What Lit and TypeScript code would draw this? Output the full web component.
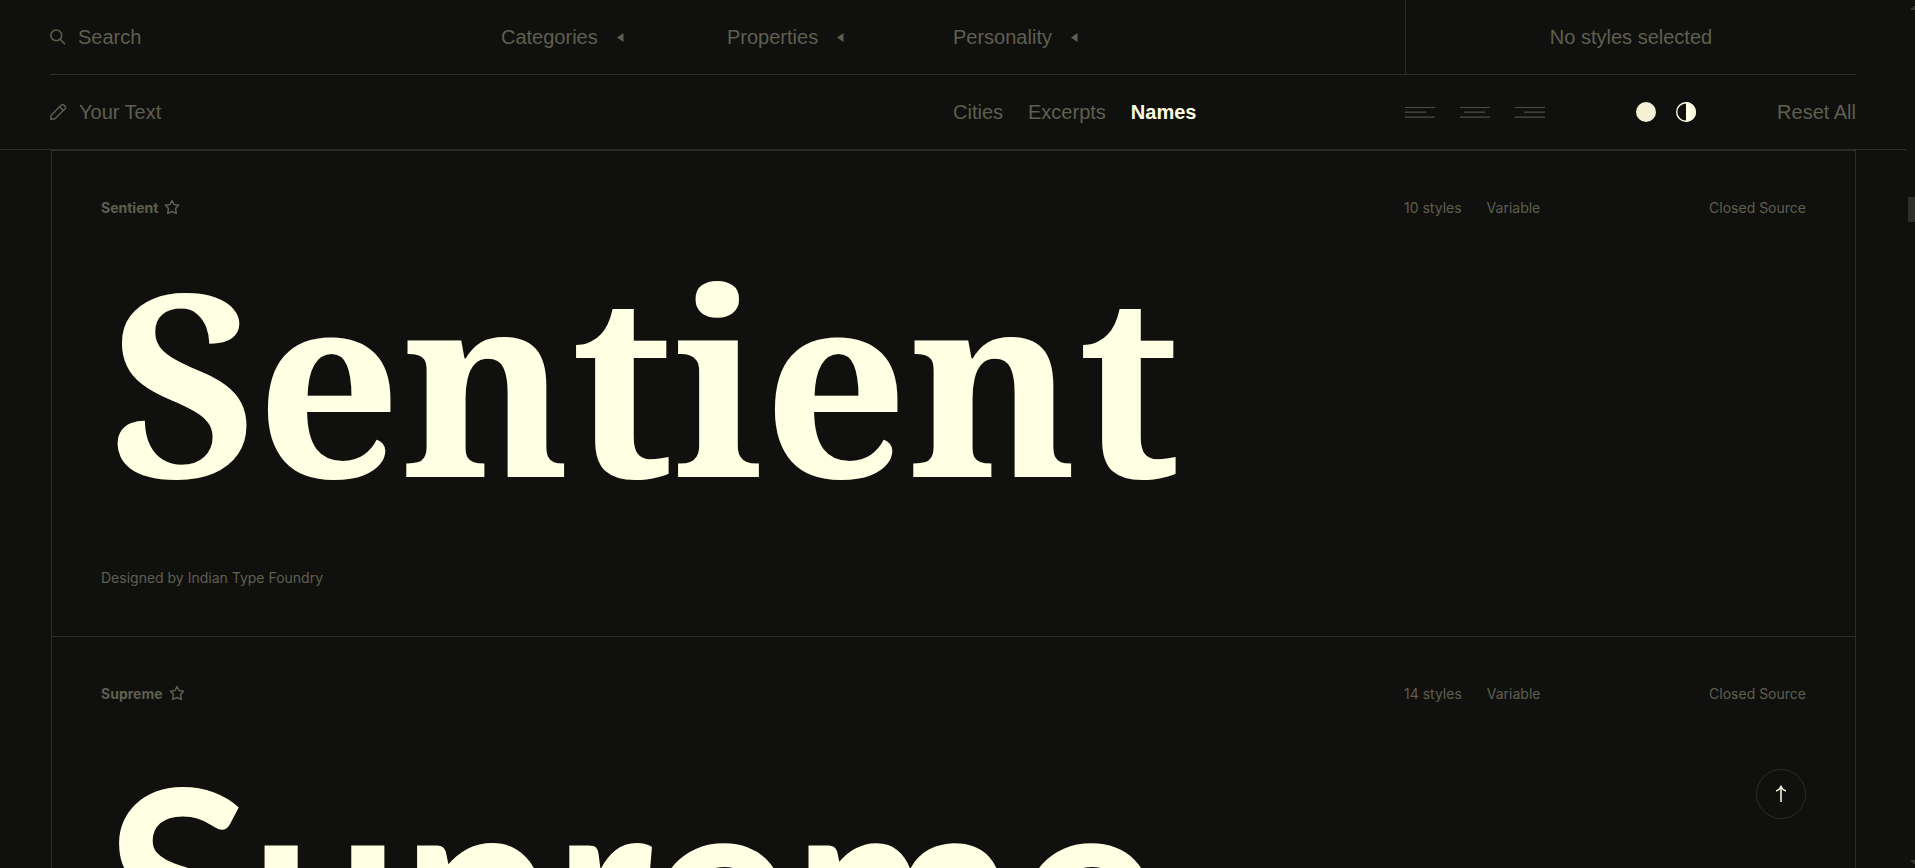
import { LitElement, html, css, svg } from "lit";
import { customElement, property, state } from "lit/decorators.js";
import { classMap } from "lit/directives/class-map.js";

interface Family {
  name: string;
  styles: number;
  designer: string;
  face: string;
}

const FAMILIES: Family[] = [
  { name: "Sentient", styles: 10, designer: "Indian Type Foundry", face: "serif" },
  { name: "Supreme", styles: 14, designer: "Jérémie Hornus, Ilya Naumoff", face: "sans" },
];

const FILTERS = ["Categories", "Properties", "Personality"];
const SAMPLES = ["Cities", "Excerpts", "Names"];

const ALIGNMENTS = [
  { name: "left", x: 0 },
  { name: "center", x: 4 },
  { name: "right", x: 9 },
];

@customElement("font-card")
export class FontCard extends LitElement {
  @property({ attribute: false }) family!: Family;

  static styles = css`
    :host {
      display: block;
      border-bottom: 1px solid #2c2d28;
      padding: 42px 49px 38px;
    }
    .meta {
      display: grid;
      grid-template-columns: minmax(0, 1303fr) minmax(0, 402fr);
      align-items: center;
      height: 28px;
    }
    .title,
    .facts {
      display: flex;
      align-items: center;
    }
    .title {
      gap: 6px;
    }
    h2 {
      margin: 0;
      font-size: 14px;
      font-weight: 700;
    }
    .star {
      display: flex;
      padding: 0;
      border: 0;
      background: none;
      color: inherit;
    }
    .facts {
      gap: 25px;
    }
    .license {
      margin-left: auto;
    }
    .specimen {
      color: #ffffe3;
      height: 300px;
      margin: 8px 0 29px;
      white-space: nowrap;
    }
    .serif {
      padding-left: 8px;
      font-family: "Noto Serif", "Liberation Serif", serif;
      font-weight: 700;
      font-size: 254px;
      line-height: 298px;
    }
    .sans {
      padding-left: 4px;
      font-family: Lato, "Liberation Sans", sans-serif;
      font-weight: 700;
      font-size: 268px;
      line-height: 328px;
    }
    .designer {
      margin: 0;
      line-height: 40px;
    }
  `;

  render() {
    const f = this.family;
    return html`
      <div class="meta">
        <div class="title">
          <h2>${f.name}</h2>
          <button class="star" aria-label="Add ${f.name} to favourites">
            <svg width="16" height="16" viewBox="0 0 16 16" fill="none" stroke="currentColor" stroke-width="1.5" stroke-linejoin="round">
              <path d="M8 1.5 10 5.5 14.6 6.2 11.5 9.4 12.3 14.4 8 12.5 3.7 14.4 4.5 9.4 1.4 6.2 6 5.5Z" />
            </svg>
          </button>
        </div>
        <div class="facts">
          <span>${f.styles} styles</span>
          <span>Variable</span>
          <span class="license">Closed Source</span>
        </div>
      </div>
      <div class="specimen ${f.face}">${f.name}</div>
      <p class="designer">Designed by ${f.designer}</p>
    `;
  }
}

@customElement("app-root")
export class AppRoot extends LitElement {
  @state() private sample = "Names";

  static styles = css`
    :host {
      display: block;
      box-sizing: border-box;
      height: 100vh;
      overflow: hidden;
      background: #10110e;
      color: #5f5f50;
      font-family: Inter, "Liberation Sans", sans-serif;
      font-size: 14px;
    }
    .page {
      display: grid;
      grid-template-columns: minmax(0, 1fr) 9px;
      height: 100%;
    }
    .content {
      overflow: hidden;
    }
    .bar {
      border-bottom: 1px solid #2c2d28;
      padding: 0 50px;
      font-family: "Liberation Sans", Arial, sans-serif;
      font-size: 20px;
    }
    .row {
      display: grid;
      grid-template-columns: 451fr 226fr 226fr 452fr 231fr 220fr;
      align-items: center;
      height: 74px;
    }
    .filters {
      border-bottom: 1px solid #2c2d28;
    }
    .field {
      display: flex;
      align-items: center;
      gap: 11px;
    }
    .field input {
      width: 240px;
      padding: 0;
      border: 0;
      outline: 0;
      background: none;
      color: inherit;
      font: inherit;
    }
    .field input::placeholder {
      color: inherit;
      opacity: 1;
    }
    button {
      padding: 0;
      border: 0;
      background: none;
      color: inherit;
      font: inherit;
    }
    .filter {
      display: flex;
      align-items: center;
      gap: 19px;
    }
    .selection {
      grid-column: span 2;
      align-self: stretch;
      display: flex;
      align-items: center;
      justify-content: center;
      border-left: 1px solid #2c2d28;
    }
    .prompt {
      grid-column: span 3;
    }
    .samples {
      display: flex;
      gap: 25px;
    }
    .chosen {
      color: #ffffe3;
      font-weight: 700;
    }
    .aligns {
      display: flex;
      gap: 25px;
    }
    .aligns button,
    .themes button {
      display: flex;
    }
    .tools {
      display: flex;
      align-items: center;
      justify-content: space-between;
    }
    .themes {
      display: flex;
      gap: 20px;
      color: #ffffe3;
    }
    .list {
      margin: 0 50px 0 51px;
      border: 1px solid #2c2d28;
    }
    .scroll {
      display: flex;
      flex-direction: column;
      justify-content: space-between;
      align-items: flex-end;
      padding: 6px 0 4px;
      color: #35362f;
    }
    .track {
      flex: 1;
      padding-top: 187px;
    }
    .thumb {
      width: 7px;
      height: 25px;
      background: #2e2f29;
    }
    .top {
      position: fixed;
      right: 109px;
      bottom: 49px;
      display: grid;
      place-items: center;
      width: 50px;
      height: 50px;
      border: 1px solid #2c2d28;
      border-radius: 50%;
      background: #10110e;
      color: #ffffe3;
    }
  `;

  private lines(x: number) {
    return svg`<path d="M0 .5H30M${x} 5.2H${x + 21}M0 10.2H30" stroke="#4c4d42" stroke-width="1.2" />`;
  }

  render() {
    return html`
      <div class="page">
        <div class="content">
          <header class="bar">
            <div class="row filters">
              <label class="field">
                <svg width="17" height="17" viewBox="0 0 17 17" fill="none" stroke="currentColor" stroke-width="1.5">
                  <circle cx="6.3" cy="6.3" r="5.4" />
                  <path d="M10.2 10.2 15 15.3" />
                </svg>
                <input type="text" aria-label="Search" placeholder="Search" />
              </label>
              ${FILTERS.map(
                (name) => html`<button class="filter">
                  ${name}
                  <svg width="7" height="9" viewBox="0 0 7 9" fill="currentColor"><path d="M6.5 0V9L0 4.5Z" /></svg>
                </button>`
              )}
              <div class="selection">No styles selected</div>
            </div>
            <div class="row">
              <label class="field prompt">
                <svg width="18" height="18" viewBox="0 0 18 18" fill="none" stroke="currentColor" stroke-width="1.4" stroke-linejoin="round">
                  <path d="M.8 16.3 1.2 12.2 11.3 2.1Q12.5 .9 13.8 2.1L15 3.3Q16.2 4.6 15 5.8L5 15.8ZM9.6 3.8 13.3 7.5" />
                </svg>
                <input type="text" aria-label="Your Text" placeholder="Your Text" />
              </label>
              <div class="samples">
                ${SAMPLES.map(
                  (s) => html`<button class=${classMap({ chosen: s === this.sample })} @click=${() => (this.sample = s)}>${s}</button>`
                )}
              </div>
              <div class="aligns">
                ${ALIGNMENTS.map(
                  (a) => html`<button aria-label="Align ${a.name}">
                    <svg width="30" height="11" viewBox="0 0 30 11">${this.lines(a.x)}</svg>
                  </button>`
                )}
              </div>
              <div class="tools">
                <div class="themes">
                  <button aria-label="Colour">
                    <svg width="20" height="20" viewBox="0 0 20 20"><circle cx="10" cy="10" r="10" fill="#f5f0d3" /></svg>
                  </button>
                  <button aria-label="Invert colours">
                    <svg width="20" height="20" viewBox="0 0 20 20">
                      <circle cx="10" cy="10" r="9.3" fill="none" stroke="currentColor" stroke-width="1.4" />
                      <path d="M10 0A10 10 0 0 1 10 20Z" fill="currentColor" />
                    </svg>
                  </button>
                </div>
                <button>Reset All</button>
              </div>
            </div>
          </header>
          <main class="list">${FAMILIES.map((f) => html`<font-card .family=${f}></font-card>`)}</main>
        </div>
        <div class="scroll" aria-hidden="true">
          <svg width="5" height="4" viewBox="0 0 5 4" fill="currentColor"><path d="M0 4 4 0H5V4Z" /></svg>
          <div class="track"><div class="thumb"></div></div>
          <svg width="5" height="4" viewBox="0 0 5 4" fill="currentColor"><path d="M0 0H5V4H4Z" /></svg>
        </div>
      </div>
      <button class="top" aria-label="Back to top">
        <svg width="12" height="18" viewBox="0 0 12 18" fill="none" stroke="currentColor" stroke-width="1.5">
          <path d="M6 17V2" />
          <path d="M1.2 6Q4.5 5 6 1.5Q7.5 5 10.8 6" />
        </svg>
      </button>
    `;
  }
}
